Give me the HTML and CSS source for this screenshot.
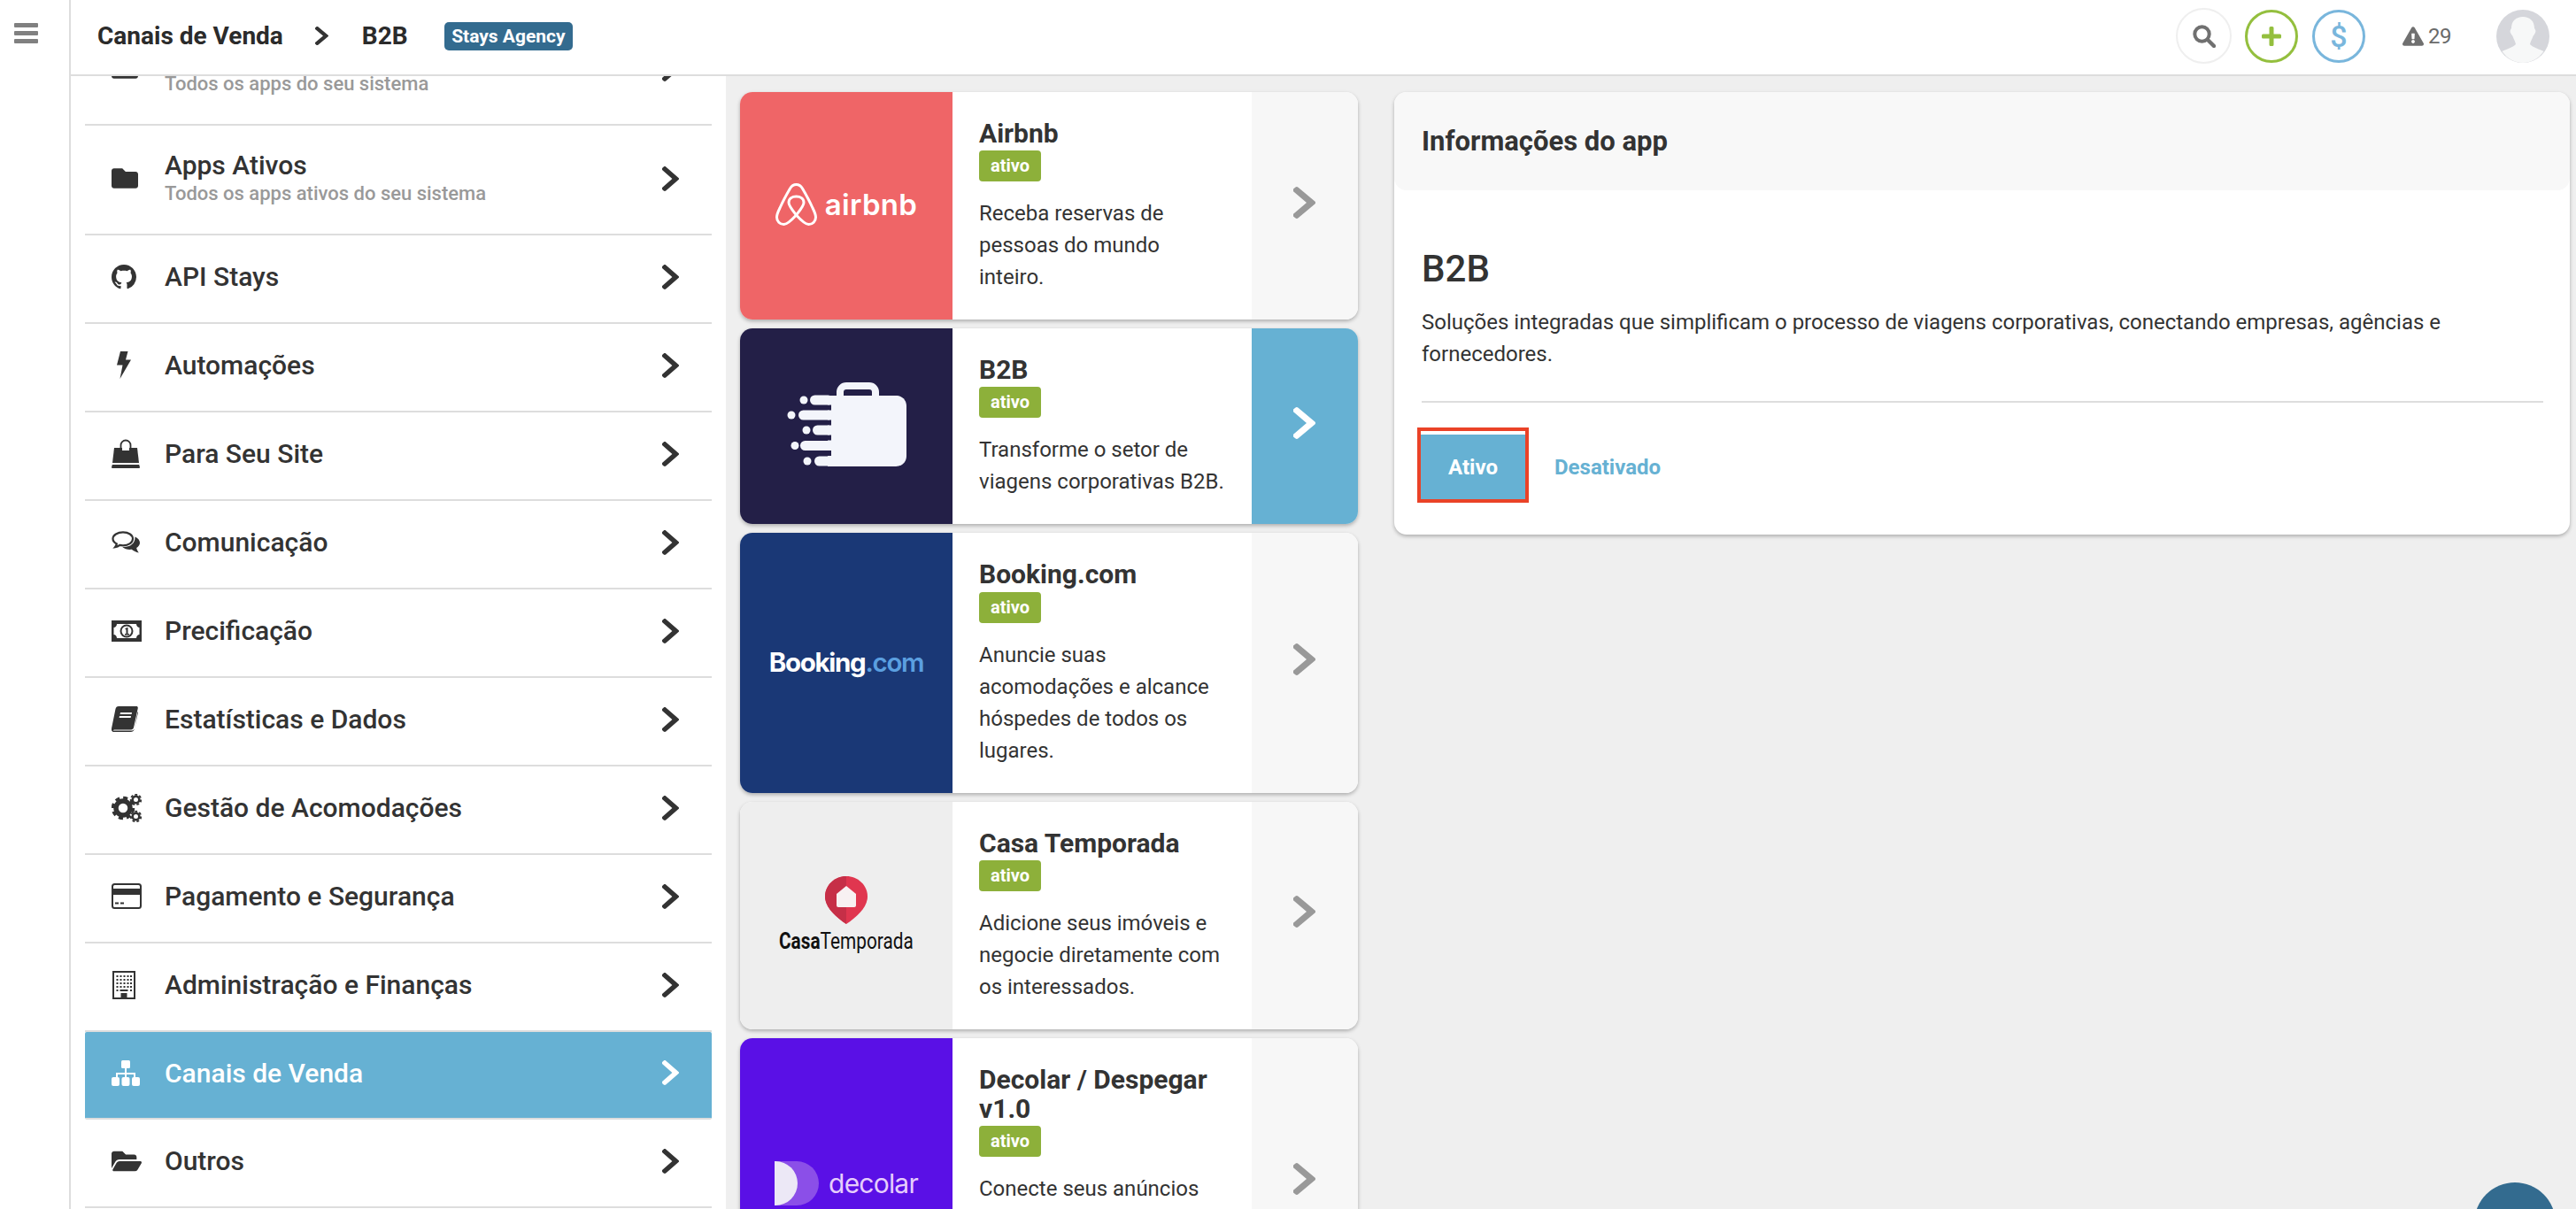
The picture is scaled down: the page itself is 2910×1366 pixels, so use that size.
FILE: index.html
```html
<!DOCTYPE html>
<html lang="pt-BR">
<head>
<meta charset="utf-8">
<title>Canais de Venda - B2B</title>
<link rel="stylesheet" href="styles.css">
</head>
<body>
<svg class="sprite" aria-hidden="true">
  <symbol id="chev" viewBox="34 37 258 438" preserveAspectRatio="none"><path d="M285.476 272.971L91.132 467.314c-9.373 9.373-24.569 9.373-33.941 0l-22.667-22.667c-9.357-9.357-9.375-24.522-.04-33.901L188.505 256 34.484 101.255c-9.335-9.379-9.317-24.544.04-33.901l22.667-22.667c9.373-9.373 24.569-9.373 33.941 0L285.475 239.03c9.373 9.372 9.373 24.568.001 33.941z"/></symbol>
</svg>

<aside class="rail">
  <svg class="burger" viewBox="0 0 27 23"><rect width="27" height="5" rx="1"/><rect y="9" width="27" height="5" rx="1"/><rect y="18" width="27" height="5" rx="1"/></svg>
</aside>

<div class="main">
  <header class="topbar">
    <nav class="crumbs">
      <span class="crumb">Canais de Venda</span>
      <svg class="crumb-chev"><use href="#chev"/></svg>
      <span class="crumb">B2B</span>
      <span class="tag">Stays Agency</span>
    </nav>
    <div class="actions">
      <span class="round round-search"><svg viewBox="0 0 26 26" class="i-search"><circle cx="10.5" cy="10.5" r="8.2" fill="none" stroke="#707070" stroke-width="4"/><path d="M17 17l7 7" stroke="#707070" stroke-width="4.4" stroke-linecap="round"/></svg></span>
      <span class="round round-plus"><svg viewBox="0 0 22 22" class="i-plus"><path d="M8.5 1.5a1.5 1.5 0 0 1 1.5-1.5h2a1.5 1.5 0 0 1 1.5 1.5v7h7a1.5 1.5 0 0 1 1.5 1.5v2a1.5 1.5 0 0 1-1.5 1.5h-7v7a1.5 1.5 0 0 1-1.5 1.5h-2a1.5 1.5 0 0 1-1.5-1.5v-7h-7a1.5 1.5 0 0 1-1.5-1.5v-2a1.5 1.5 0 0 1 1.5-1.5h7z"/></svg></span>
      <span class="round round-money">$</span>
      <span class="alert"><svg viewBox="0 0 576 512" class="i-warn"><path d="M569.517 440.013C587.975 472.007 564.806 512 527.94 512H48.054c-36.937 0-59.999-40.055-41.577-71.987L246.423 24.028c18.467-32.009 64.72-31.951 83.154 0l239.94 416.985zM288 354c-25.405 0-46 20.595-46 46s20.595 46 46 46 46-20.595 46-46-20.595-46-46-46zm-43.673-165.346l7.418 136c.347 6.364 5.609 11.346 11.982 11.346h48.546c6.373 0 11.635-4.982 11.982-11.346l7.418-136c.375-6.874-5.098-12.654-11.982-12.654h-63.383c-6.884 0-12.356 5.78-11.981 12.654z"/></svg>29</span>
      <svg class="avatar" viewBox="0 0 60 60"><circle cx="30" cy="30" r="30" fill="#d5d6db"/><path d="M30 8c8 0 13 5 13 13 1 1 2 3 1 5-1 2-2 3-2.500 4-1 3-3 6-3.500 9 4 4 12 6 15.500 8C48 55 39 60 30 60S12 55 6.500 47C10 45 18 43 22 39c-.5-3-2.500-6-3.500-9-.5-1-1.500-2-2.500-4-1-2 0-4 1-5 0-8 5-13 13-13z" fill="#f7f8f8"/></svg>
    </div>
  </header>

  <div class="content">
    <section class="menu">
      <ul class="menu-list">
        <li class="menu-item menu-item-sub">
          <span class="menu-icon"><svg class="i-folder" viewBox="0 64 512 384"><path d="M464 128H272l-64-64H48C21.49 64 0 85.49 0 112v288c0 26.51 21.49 48 48 48h416c26.51 0 48-21.49 48-48V176c0-26.51-21.49-48-48-48z"/></svg></span>
          <span class="menu-text"><b class="menu-title">&nbsp;</b><small class="menu-sub">Todos os apps do seu sistema</small></span>
          <svg class="menu-chev"><use href="#chev"/></svg>
        </li>
        <li class="menu-item menu-item-sub">
          <span class="menu-icon"><svg class="i-folder" viewBox="0 64 512 384"><path d="M464 128H272l-64-64H48C21.49 64 0 85.49 0 112v288c0 26.51 21.49 48 48 48h416c26.51 0 48-21.49 48-48V176c0-26.51-21.49-48-48-48z"/></svg></span>
          <span class="menu-text"><b class="menu-title">Apps Ativos</b><small class="menu-sub">Todos os apps ativos do seu sistema</small></span>
          <svg class="menu-chev"><use href="#chev"/></svg>
        </li>
        <li class="menu-item">
          <span class="menu-icon"><svg class="i-github" viewBox="0 0 16 16"><path d="M8 0C3.58 0 0 3.58 0 8c0 3.54 2.29 6.53 5.47 7.59.4.07.55-.17.55-.38 0-.19-.01-.82-.01-1.49-2.01.37-2.53-.49-2.69-.94-.09-.23-.48-.94-.82-1.13-.28-.15-.68-.52-.01-.53.63-.01 1.08.58 1.23.82.72 1.21 1.87.87 2.33.66.07-.52.28-.87.51-1.07-1.78-.2-3.64-.89-3.64-3.95 0-.87.31-1.59.82-2.15-.08-.2-.36-1.02.08-2.12 0 0 .67-.21 2.2.82.64-.18 1.32-.27 2-.27.68 0 1.36.09 2 .27 1.53-1.04 2.2-.82 2.2-.82.44 1.1.16 1.92.08 2.12.51.56.82 1.27.82 2.15 0 3.07-1.87 3.75-3.65 3.95.29.25.54.73.54 1.48 0 1.07-.01 1.93-.01 2.2 0 .21.15.46.55.38A8.013 8.013 0 0016 8c0-4.42-3.58-8-8-8z"/></svg></span>
          <span class="menu-text"><b class="menu-title">API Stays</b></span>
          <svg class="menu-chev"><use href="#chev"/></svg>
        </li>
        <li class="menu-item">
          <span class="menu-icon"><svg class="i-bolt" viewBox="0 0 16 31"><path d="M4 0h8.500l-2.500 9.500h6L3.500 31l3-15.500H0z"/></svg></span>
          <span class="menu-text"><b class="menu-title">Automações</b></span>
          <svg class="menu-chev"><use href="#chev"/></svg>
        </li>
        <li class="menu-item">
          <span class="menu-icon"><svg class="i-bag" viewBox="0 0 32 33"><path d="M3 10h26l2 17H1z"/><path d="M.8 29h30.400l.8 3a1 1 0 0 1-1 1H1a1 1 0 0 1-1-1z"/><path d="M10.500 14V7a5.500 5.500 0 0 1 11 0v7" fill="none" stroke="#333" stroke-width="1.800"/><path d="M12 10v3h8v-3z" fill="#fff"/><path d="M10.500 11v3M21.500 11v3" stroke="#333" stroke-width="1.800"/></svg></span>
          <span class="menu-text"><b class="menu-title">Para Seu Site</b></span>
          <svg class="menu-chev"><use href="#chev"/></svg>
        </li>
        <li class="menu-item">
          <span class="menu-icon"><svg class="i-comm" viewBox="0 0 32 25"><path d="M13 1.300c6.300 0 11 3.300 11 7.500s-4.700 7.500-11 7.500c-1.300 0-2.500-.1-3.700-.4-1.500 1.200-3.200 2-5.300 2.300 1-1.200 1.600-2.300 1.800-3.700C3.200 13.200 1.500 11.200 1.500 8.800c0-4.200 5.200-7.500 11.500-7.500z" fill="none" stroke="#333" stroke-width="2.200"/><path d="M26.500 6.500c3.200 1.500 5.500 3.800 5.500 6.800 0 2.500-1.700 4.500-3.800 5.700.3 2 1.300 3.700 2.600 5.500-3-.5-6-2-8-3.700-4 .5-8-.5-10.500-2.800 8 .5 14.700-3.500 14.200-11.500z"/></svg></span>
          <span class="menu-text"><b class="menu-title">Comunicação</b></span>
          <svg class="menu-chev"><use href="#chev"/></svg>
        </li>
        <li class="menu-item">
          <span class="menu-icon"><svg class="i-money" viewBox="0 0 34 24"><rect width="34" height="24" fill="#333"/><path d="M6 4h22c0 2 1.500 4 3.500 4v8c-2 0-3.500 2-3.500 4H6c0-2-1.500-4-3.500-4V8C4.500 8 6 6 6 4z" fill="#fff"/><circle cx="17" cy="12" r="7.500" fill="#333"/><circle cx="17" cy="12" r="5.500" fill="#fff"/><path d="M15 9.500l2.500-1.500h1v7h1.500v1.500h-5V15h1.500v-4.500z" fill="#333"/></svg></span>
          <span class="menu-text"><b class="menu-title">Precificação</b></span>
          <svg class="menu-chev"><use href="#chev"/></svg>
        </li>
        <li class="menu-item">
          <span class="menu-icon"><svg class="i-book" viewBox="0 0 30 29"><path d="M8 0h20c1.500 0 2 1 1.700 2.500L25 24c-.3 1.500-1.500 2.500-3 2.500H4c-1.500 0-2.500.5-2 1H23c1.500 0 2.500-1 3-2.500L29.500 6l.5 1-4 18c-.5 2.500-2 4-4.500 4H3c-2.500 0-3.500-2-3-4L4.500 3C5 1 6 0 8 0z"/><path d="M10 7h13l-.4 2H9.600zM9 11h13l-.4 2H8.600z" fill="#fff"/></svg></span>
          <span class="menu-text"><b class="menu-title">Estatísticas e Dados</b></span>
          <svg class="menu-chev"><use href="#chev"/></svg>
        </li>
        <li class="menu-item">
          <span class="menu-icon"><svg class="i-cogs" viewBox="0 0 34 32"><circle cx="13" cy="16" r="8" fill="none" stroke="#333" stroke-width="5.500"/><circle cx="13" cy="16" r="11.500" fill="none" stroke="#333" stroke-width="3.500" stroke-dasharray="5 4"/><circle cx="27.500" cy="6.500" r="3.800" fill="none" stroke="#333" stroke-width="2.600"/><circle cx="27.500" cy="6.500" r="5.700" fill="none" stroke="#333" stroke-width="2" stroke-dasharray="2.800 2.200"/><circle cx="27.500" cy="25.500" r="3.800" fill="none" stroke="#333" stroke-width="2.600"/><circle cx="27.500" cy="25.500" r="5.700" fill="none" stroke="#333" stroke-width="2" stroke-dasharray="2.800 2.200"/></svg></span>
          <span class="menu-text"><b class="menu-title">Gestão de Acomodações</b></span>
          <svg class="menu-chev"><use href="#chev"/></svg>
        </li>
        <li class="menu-item">
          <span class="menu-icon"><svg class="i-card" viewBox="0 0 34 29"><rect x="1" y="1" width="32" height="27" rx="2.500" fill="#fff" stroke="#333" stroke-width="2"/><rect x="1" y="6" width="32" height="7" fill="#333"/><path d="M4 21.500h4v2H4zM10 21.500h4v2h-4z"/></svg></span>
          <span class="menu-text"><b class="menu-title">Pagamento e Segurança</b></span>
          <svg class="menu-chev"><use href="#chev"/></svg>
        </li>
        <li class="menu-item">
          <span class="menu-icon"><svg class="i-build" viewBox="0 0 26 32"><rect x="1" y="1" width="24" height="30" fill="#fff" stroke="#333" stroke-width="2"/><path d="M4.500 5h2v2h-2zM8.500 5h2v2h-2zM12.500 5h2v2h-2zM16.500 5h2v2h-2zM20 5h2v2h-2zM4.500 9h2v2h-2zM8.500 9h2v2h-2zM12.500 9h2v2h-2zM16.500 9h2v2h-2zM20 9h2v2h-2zM4.500 13h2v2h-2zM8.500 13h2v2h-2zM12.500 13h2v2h-2zM16.500 13h2v2h-2zM20 13h2v2h-2zM4.500 17h2v2h-2zM8.500 17h2v2h-2zM12.500 17h2v2h-2zM16.500 17h2v2h-2zM20 17h2v2h-2zM4.500 21h2v2h-2zM20 21h2v2h-2zM8.500 21h9v2h-9zM9.500 25h7v6h-7z"/></svg></span>
          <span class="menu-text"><b class="menu-title">Administração e Finanças</b></span>
          <svg class="menu-chev"><use href="#chev"/></svg>
        </li>
        <li class="menu-item menu-item-active">
          <span class="menu-icon"><svg class="i-map" viewBox="0 0 32 29"><rect x="11" width="10" height="9" rx="1.500"/><path d="M15 8h2v6h10v7h-2v-5h-8v5h-2v-5H7v5H5v-7h10z"/><rect y="19" width="9" height="10" rx="2"/><rect x="11.500" y="19" width="9" height="10" rx="2"/><rect x="23" y="19" width="9" height="10" rx="2"/></svg></span>
          <span class="menu-text"><b class="menu-title">Canais de Venda</b></span>
          <svg class="menu-chev"><use href="#chev"/></svg>
        </li>
        <li class="menu-item">
          <span class="menu-icon"><svg class="i-open" viewBox="0 64 576 384"><path d="M572.694 292.093L500.27 416.248A63.997 63.997 0 0 1 444.989 448H45.025c-18.523 0-30.064-20.093-20.731-36.093l72.424-124.155A64 64 0 0 1 152 256h399.964c18.523 0 30.064 20.093 20.73 36.093zM152 224h328v-48c0-26.51-21.49-48-48-48H272l-64-64H48C21.49 64 0 85.49 0 112v278.046l69.077-118.418C86.214 242.25 117.989 224 152 224z"/></svg></span>
          <span class="menu-text"><b class="menu-title">Outros</b></span>
          <svg class="menu-chev"><use href="#chev"/></svg>
        </li>
      </ul>
    </section>

    <section class="cards">
      <article class="card">
        <div class="logo logo-airbnb">
          <svg class="airbnb-mark" viewBox="0 0 47 48"><path d="M23.500 36C18 29 15 25.500 15 22 15 17.500 19 15 23.500 15 28 15 32 17.500 32 22 32 25.500 29 29 23.500 36 18 42 13 46.500 9.500 46.500 5 46.500 1.500 43 1.500 38.500 1.500 35.500 3 32 5 28 9 19 13 12 16.500 6 18.500 2.500 21 1.500 23.500 1.500 26 1.500 28.500 2.500 30.500 6 34 12 38 19 42 28 44 32 45.500 35.500 45.500 38.500 45.500 43 42 46.500 37.500 46.500 34 46.500 29 42 23.500 36Z" fill="none" stroke="#fff" stroke-width="3" stroke-linejoin="round"/></svg>
          <span class="airbnb-word">airbnb</span>
        </div>
        <div class="card-body">
          <h3 class="card-title">Airbnb</h3>
          <span class="badge">ativo</span>
          <p class="card-desc">Receba reservas de pessoas do mundo inteiro.</p>
        </div>
        <div class="card-go"><svg class="go-chev"><use href="#chev"/></svg></div>
      </article>

      <article class="card card-active">
        <div class="logo logo-b2b">
          <svg class="b2b-mark" viewBox="0 0 135 95">
            <rect x="60" y="4" width="40" height="24" rx="7" fill="none" stroke="#f3f5fb" stroke-width="8"/>
            <path d="M46 15h77c7 0 12 5 12 12v56c0 7-5 12-12 12H46z" fill="#f3f5fb"/>
            <g fill="#231f47"><rect x="20" y="25.500" width="30" height="6"/><rect x="20" y="42.500" width="30" height="6"/><rect x="20" y="59.500" width="30" height="6"/><rect x="20" y="77" width="30" height="6"/></g>
            <g fill="#f3f5fb"><rect x="26" y="14.500" width="26" height="11" rx="5.500"/><rect x="13" y="31.500" width="39" height="11" rx="5.500"/><rect x="29" y="48.500" width="23" height="11" rx="5.500"/><rect x="15" y="66" width="37" height="11" rx="5.500"/><rect x="31" y="83.500" width="21" height="11" rx="5.500"/><circle cx="19" cy="20" r="4.500"/><circle cx="5" cy="37" r="4.500"/><circle cx="22" cy="54" r="4.500"/><circle cx="9" cy="71.500" r="4.500"/><circle cx="23" cy="89" r="4.500"/></g>
          </svg>
        </div>
        <div class="card-body">
          <h3 class="card-title">B2B</h3>
          <span class="badge">ativo</span>
          <p class="card-desc">Transforme o setor de viagens corporativas B2B.</p>
        </div>
        <div class="card-go"><svg class="go-chev"><use href="#chev"/></svg></div>
      </article>

      <article class="card">
        <div class="logo logo-booking"><span class="booking-word">Booking<span class="booking-dot">.com</span></span></div>
        <div class="card-body">
          <h3 class="card-title">Booking.com</h3>
          <span class="badge">ativo</span>
          <p class="card-desc">Anuncie suas acomodações e alcance hóspedes de todos os lugares.</p>
        </div>
        <div class="card-go"><svg class="go-chev"><use href="#chev"/></svg></div>
      </article>

      <article class="card">
        <div class="logo logo-casa">
          <svg class="casa-pin" viewBox="0 0 48 54"><path d="M24 0c13 0 24 10 24 23 0 12-12 23-24 31C12 46 0 35 0 23 0 10 11 0 24 0z" fill="#e0364f"/><path d="M24 0C11 0 0 10 0 23c0 12 12 23 24 31z" fill="#c62f47"/><path d="M24 11l11 9v13a2 2 0 0 1-2 2H15a2 2 0 0 1-2-2V20z" fill="#f8f1f2"/></svg>
          <span class="casa-word"><b>Casa</b>Temporada</span>
        </div>
        <div class="card-body">
          <h3 class="card-title">Casa Temporada</h3>
          <span class="badge">ativo</span>
          <p class="card-desc">Adicione seus imóveis e negocie diretamente com os interessados.</p>
        </div>
        <div class="card-go"><svg class="go-chev"><use href="#chev"/></svg></div>
      </article>

      <article class="card card-tall">
        <div class="logo logo-decolar">
          <svg class="decolar-mark" viewBox="0 0 50 50"><path d="M0 0h25a25 25 0 0 1 0 50H0z" fill="#8b4fe8"/><path d="M0 0h1a25 25 0 0 1 0 50H0z" fill="#ece8f6"/></svg>
          <span class="decolar-word">decolar</span>
        </div>
        <div class="card-body">
          <h3 class="card-title">Decolar / Despegar v1.0</h3>
          <span class="badge">ativo</span>
          <p class="card-desc">Conecte seus anúncios</p>
        </div>
        <div class="card-go"><svg class="go-chev"><use href="#chev"/></svg></div>
      </article>
    </section>

    <section class="info">
      <header class="info-head"><h2 class="info-title">Informações do app</h2></header>
      <div class="info-body">
        <h1 class="info-name">B2B</h1>
        <p class="info-desc">Soluções integradas que simplificam o processo de viagens corporativas, conectando empresas, agências e fornecedores.</p>
        <hr class="info-rule">
        <div class="switch">
          <span class="marker"><span class="btn-on">Ativo</span></span>
          <span class="btn-off">Desativado</span>
        </div>
      </div>
    </section>
  </div>
</div>

<div class="dock"></div>
</body>
</html>
```

FILE: styles.css
```css
* { box-sizing: border-box; }
html, body { height: 100%; }
body {
  margin: 0;
  display: flex;
  height: 100vh;
  overflow: hidden;
  background: #efefef;
  color: #333;
  font-family: Roboto, "Liberation Sans", sans-serif;
}
h1, h2, h3, p, ul { margin: 0; padding: 0; }
svg { display: block; fill: currentColor; }
.sprite { width: 0; height: 0; position: absolute; }

.rail {
  flex: 0 0 80px;
  background: #fff;
  border-right: 2px solid #ddd;
  padding: 26px 0 0 16px;
}
.burger { width: 27px; height: 23px; color: #808080; }

.main { flex: 1; min-width: 0; display: flex; flex-direction: column; }

.topbar {
  flex: 0 0 86px;
  display: flex;
  align-items: center;
  justify-content: space-between;
  background: #fff;
  border-bottom: 2px solid #ddd;
  padding: 0 30px 3px 30px;
}
.crumbs { display: flex; align-items: center; }
.crumb { font-size: 28px; font-weight: 700; color: #2b2b2b; }
.crumb-chev { width: 15px; height: 21px; margin: 0 38px 0 36px; color: #333; }
.tag {
  margin: 1px 0 0 41px;
  height: 32px;
  padding: 0 8.500px;
  display: flex;
  align-items: center;
  border-radius: 5px;
  background: #336b8f;
  color: #fff;
  font-size: 21px;
  font-weight: 700;
}
.actions { display: flex; align-items: center; }
.round {
  width: 60px;
  height: 60px;
  border-radius: 50%;
  display: flex;
  align-items: center;
  justify-content: center;
  background: #fff;
}
.round-search { width: 63px; height: 63px; border: 2px solid #efefef; margin-right: 15px; }
.i-search { width: 26px; height: 26px; }
.round-plus { border: 3px solid #94bf3e; margin-right: 16px; }
.i-plus { width: 22px; height: 22px; color: #94bf3e; }
.round-money {
  border: 3px solid #79b6dc;
  color: #79b6dc;
  font-size: 34px;
  font-weight: 500;
}
.alert {
  display: flex;
  align-items: center;
  gap: 5px;
  margin-left: 42px;
  color: #6a6a6a;
  font-size: 24px;
  letter-spacing: -.5px;
}
.i-warn { width: 24px; height: 22px; color: #707070; }
.avatar { width: 60px; height: 60px; margin-left: 51px; }

.content { flex: 1; min-height: 0; display: flex; overflow: hidden; }

.menu {
  flex: 0 0 740px;
  background: #fff;
  padding: 0 16px;
  overflow: hidden;
}
.menu-list { list-style: none; margin-top: -68px; }
.menu-item {
  display: flex;
  align-items: center;
  height: 100px;
  border-bottom: 2px solid #ddd;
  padding: 0 37px 5px 30px;
}
.menu-item-sub { height: 124px; padding-bottom: 3px; }
.menu-icon { flex: 0 0 60px; display: flex; }
.menu-text { flex: 1; display: flex; flex-direction: column; }
.menu-title { font-weight: 500; font-size: 30px; line-height: 35px; color: #333; }
.menu-sub { font-weight: 500; font-size: 22px; line-height: 30px; color: #999; }
.menu-chev { width: 19px; height: 28px; color: #333; }
.menu-item-active { background: #66b1d3; color: #fff; border-radius: 2px; height: 99px; }
.menu-item-active .menu-title, .menu-item-active .menu-chev { color: #fff; }

.i-folder { width: 30px; height: 25px; }
.i-github { width: 28px; height: 28px; }
.i-bolt { width: 16px; height: 31px; margin-left: 6px; }
.i-bag { width: 32px; height: 33px; }
.i-comm { width: 32px; height: 25px; }
.i-money { width: 34px; height: 24px; }
.i-book { width: 30px; height: 29px; }
.i-cogs { width: 34px; height: 32px; }
.i-card { width: 34px; height: 29px; }
.i-build { width: 26px; height: 32px; margin-left: 1px; }
.i-map { width: 32px; height: 29px; }
.i-open { width: 34px; height: 26px; }

.cards {
  flex: 0 0 755px;
  padding: 18px 41px 0 16px;
  display: flex;
  flex-direction: column;
  gap: 10px;
}
.card {
  flex: none;
  display: grid;
  grid-template-columns: 240px 1fr 120px;
  border-radius: 14px;
  overflow: hidden;
  background: #fff;
  box-shadow: 0 2px 4px rgba(0, 0, 0, .28);
}
.card-tall { min-height: 326px; }
.logo { display: flex; align-items: center; justify-content: center; }
.card-body { padding: 30px; }
.card-title { font-size: 30px; line-height: 33.200px; font-weight: 700; color: #333; }
.badge {
  display: inline-block;
  margin-top: 3px;
  height: 35px;
  width: 70px;
  border-radius: 4px;
  background: #8db03a;
  color: #fff;
  font-size: 20px;
  line-height: 35px;
  font-weight: 700;
  text-align: center;
  vertical-align: top;
}
.card-desc { margin-top: 18px; font-size: 24px; line-height: 36px; color: #333; }
.card-go {
  display: flex;
  align-items: center;
  justify-content: center;
  background: #f7f7f7;
  color: #999;
  padding-bottom: 8px;
}
.go-chev { width: 25px; height: 36px; margin-left: -2px; }
.card-active .card-go { background: #66b1d3; color: #fff; }

.logo-airbnb { background: #ef6567; color: #fff; gap: 9px; padding-bottom: 3px; }
.airbnb-mark { width: 47px; height: 48px; }
.airbnb-word { font-family: Inter, sans-serif; font-weight: 600; font-size: 33px; line-height: 48px; letter-spacing: .3px; }
.logo-b2b { background: #231f47; padding-bottom: 4px; }
.b2b-mark { width: 135px; height: 95px; }
.logo-booking { background: #1a3876; padding-bottom: 2px; }
.booking-word { font-family: Inter, sans-serif; font-weight: 700; font-size: 29.500px; letter-spacing: -1.300px; color: #fff; }
.booking-dot { color: #5b9fe0; font-weight: 600; }
.logo-casa { background: #eee; flex-direction: column; gap: 4px; }
.casa-pin { width: 48px; height: 54px; }
.casa-word { display: inline-block; transform: scaleX(.8); font-size: 26px; line-height: 30px; color: #111; }
.logo-decolar { background: #5a10e6; gap: 11px; padding-top: 2px; }
.decolar-mark { width: 50px; height: 50px; }
.decolar-word { font-family: Inter, sans-serif; font-size: 30px; letter-spacing: -.8px; color: #e6cdfc; }

.info {
  flex: none;
  align-self: flex-start;
  width: 1328px;
  margin-top: 18px;
  border-radius: 14px;
  overflow: hidden;
  background: #fff;
  box-shadow: 0 2px 4px rgba(0, 0, 0, .28);
}
.info-head {
  height: 111px;
  display: flex;
  align-items: center;
  padding: 0 31px;
  background: #f8f8f8;
  border-radius: 0 0 14px 14px;
}
.info-title { font-size: 31px; font-weight: 700; color: #333; }
.info-body { padding: 65px 30px 36px 31px; }
.info-name { font-size: 42px; line-height: 47px; font-weight: 500; color: #333; }
.info-desc { margin-top: 19px; font-size: 24px; line-height: 36px; color: #333; }
.info-rule { margin: 35px 0 0; border: 0; border-top: 2px solid #ddd; }
.switch { display: flex; align-items: center; margin: 28px 0 0 -5px; }
.marker { display: block; border: 4px solid #ea4227; padding-top: 4px; background: #fff; }
.btn-on {
  display: flex;
  width: 118px;
  height: 73px;
  align-items: center;
  justify-content: center;
  background: #66b1d3;
  color: #fff;
  font-size: 24px;
  font-weight: 700;
}
.btn-off { margin-left: 29px; padding-top: 5px; color: #66b1d3; font-size: 24px; font-weight: 700; }

.dock {
  position: fixed;
  left: 2795px;
  top: 1336px;
  width: 92px;
  height: 92px;
  border-radius: 50%;
  background: #336b8f;
}
```
